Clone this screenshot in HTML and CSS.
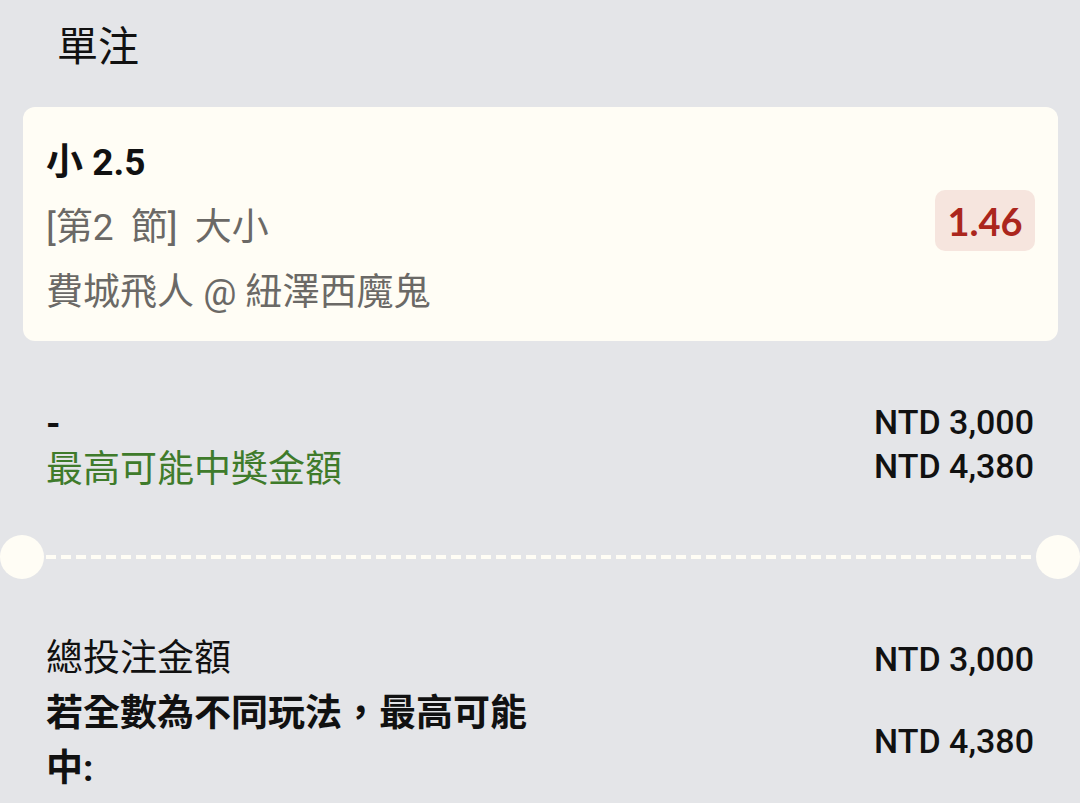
FILE: index.html
```html
<!DOCTYPE html>
<html lang="zh-Hant">
<head>
<meta charset="utf-8">
<link rel="stylesheet" href="styles.css">
</head>
<body>
<div class="page">
  <div class="title">單注</div>
  <div class="card">
    <div class="card-info">
      <div class="selection">小 2.5</div>
      <div class="market">[第2 節] 大小</div>
      <div class="match">費城飛人 @ 紐澤西魔鬼</div>
    </div>
    <div class="odds">1.46</div>
  </div>
  <div class="summary">
    <div class="summary-left">
      <div class="dash-label">-</div>
      <div class="win-label">最高可能中獎金額</div>
    </div>
    <div class="summary-right">
      <div class="amount">NTD 3,000</div>
      <div class="amount">NTD 4,380</div>
    </div>
  </div>
  <div class="divider">
    <span class="notch"></span>
    <span class="dashes"></span>
    <span class="notch"></span>
  </div>
  <div class="totals">
    <div class="total-label">總投注金額</div>
    <div class="amount">NTD 3,000</div>
    <div class="total-label strong">若全數為不同玩法，最高可能中:</div>
    <div class="amount">NTD 4,380</div>
  </div>
</div>
</body>
</html>
```
FILE: styles.css
```css
html, body {
  margin: 0;
  padding: 0;
  background: #e4e5e8;
}
body {
  font-family: Roboto, "Noto Sans CJK TC", sans-serif;
  color: #111;
  width: 1080px;
  height: 803px;
  overflow: hidden;
}
.page {
  display: flex;
  flex-direction: column;
}
.title {
  font-family: "Noto Sans CJK TC", sans-serif;
  font-size: 41px;
  line-height: 56px;
  padding: 15px 0 0 57px;
  color: #111;
}
.card {
  margin: 36px 22px 0 23px;
  height: 234px;
  box-sizing: border-box;
  background: #fffdf5;
  border-radius: 12px;
  display: flex;
  align-items: center;
  justify-content: space-between;
  padding: 23px 23px 16px 23px;
}
.card-info {
  display: flex;
  flex-direction: column;
  font-size: 37px;
  line-height: 65px;
}
.selection {
  font-weight: 700;
  color: #111;
}
.market, .match {
  color: #6b6966;
}
.market {
  word-spacing: 8px;
}
.odds {
  font-family: Lato, "Noto Sans CJK TC", sans-serif;
  background: #f6e5de;
  color: #ab261d;
  font-size: 38px;
  font-weight: 700;
  border-radius: 10px;
  width: 100px;
  height: 61px;
  display: flex;
  align-items: center;
  justify-content: center;
  margin-bottom: 14px;
}
.summary {
  display: flex;
  justify-content: space-between;
  align-items: flex-start;
  padding: 0 46px 0 46px;
  margin-top: 59px;
}
.summary-left, .summary-right {
  display: flex;
  flex-direction: column;
}
.summary-right {
  align-items: flex-end;
}
.summary-left {
  font-size: 37px;
  line-height: 44px;
}
.dash-label {
  font-weight: 700;
  line-height: 48px;
}
.win-label {
  color: #3f7b2b;
}
.amount {
  font-size: 34px;
  font-weight: 500;
  line-height: 44px;
  color: #111;
  text-align: right;
}
.divider {
  margin-top: 43px;
  display: flex;
  align-items: center;
  height: 44px;
}
.notch {
  width: 44px;
  height: 44px;
  border-radius: 50%;
  background: #fffdf5;
  flex: none;
}
.dashes {
  flex: 1;
  height: 4px;
  margin: 0 2px;
  background: repeating-linear-gradient(90deg, #fffdf5 0 10px, transparent 10px 15px);
}
.totals {
  display: grid;
  grid-template-columns: 500px 1fr;
  align-items: center;
  padding: 0 46px;
  margin-top: 52px;
}
.total-label {
  font-size: 37px;
  line-height: 55px;
  color: #111;
}
.total-label.strong {
  font-weight: 700;
}
```
